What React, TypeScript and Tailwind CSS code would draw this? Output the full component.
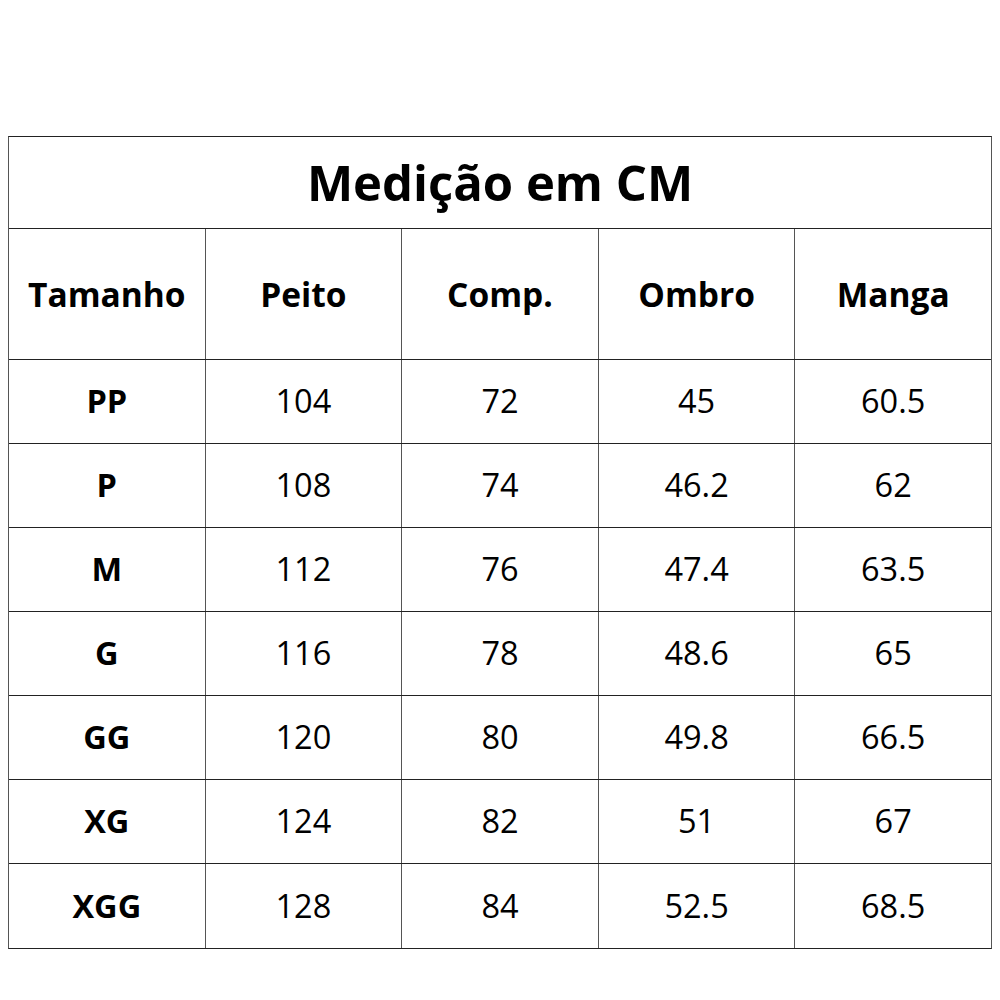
const headers = ['Tamanho', 'Peito', 'Comp.', 'Ombro', 'Manga'];

const rows: [string, string, string, string, string][] = [
  ['PP', '104', '72', '45', '60.5'],
  ['P', '108', '74', '46.2', '62'],
  ['M', '112', '76', '47.4', '63.5'],
  ['G', '116', '78', '48.6', '65'],
  ['GG', '120', '80', '49.8', '66.5'],
  ['XG', '124', '82', '51', '67'],
  ['XGG', '128', '84', '52.5', '68.5'],
];

function Row({ cells, header, height }: { cells: string[]; header?: boolean; height: string }) {
  return (
    <div className={`flex border-b border-[#222] last:border-b-0 ${height}`}>
      {cells.map((c, i) => (
        <div
          key={i}
          className={`flex-1 flex items-center justify-center text-black ${
            i < cells.length - 1 ? 'border-r border-[#555]' : ''
          } ${header ? 'text-[33.5px] font-bold' : i === 0 ? 'text-[32.5px] font-bold' : 'text-[32.5px] font-normal'}`}
        >
          {c}
        </div>
      ))}
    </div>
  );
}

export default function App() {
  return (
    <div className="w-[1000px] h-[1000px] bg-white pt-[136px] pl-[8px]" style={{ fontFamily: '"Open Sans", sans-serif' }}>
      <div className="w-[984px] border border-[#222] border-l-[#555] border-r-[#555]">
        <div className="h-[92px] flex items-center justify-center border-b border-[#222] text-[49px] font-bold text-black">
          Medição em CM
        </div>
        <Row cells={headers} header height="h-[131px]" />
        {rows.map((r) => (
          <Row key={r[0]} cells={r} height="h-[84px]" />
        ))}
      </div>
    </div>
  );
}
